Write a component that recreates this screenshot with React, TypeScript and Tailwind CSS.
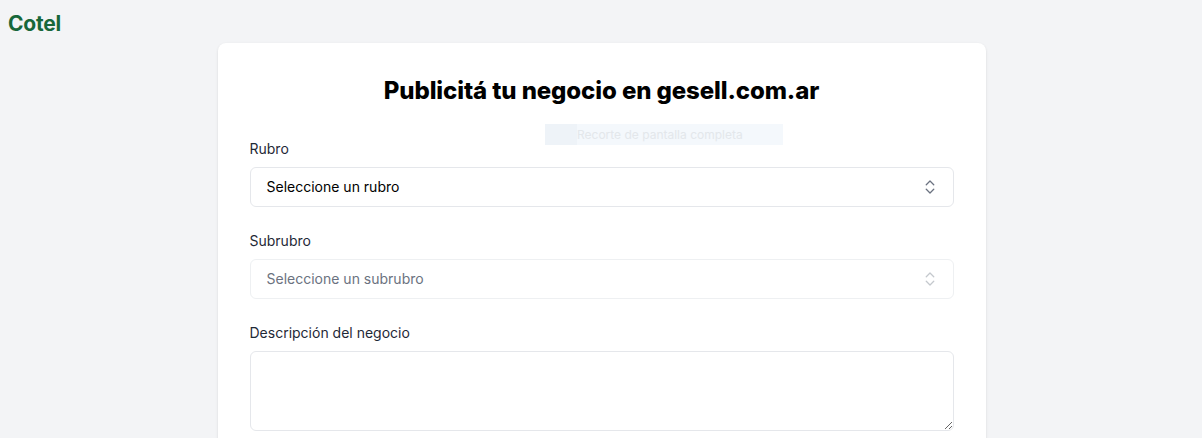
import React from "react";
import { ChevronsUpDown } from "lucide-react";

export default function App() {
  return (
    <div
      className="min-h-screen bg-[#f3f4f6] relative"
      style={{ fontFamily: "Inter, 'Noto Sans', sans-serif" }}
    >
      <div className="pl-2 pt-[10px] h-[43px]">
        <span className="text-[21px] leading-[28px] font-bold text-[#17673a] tracking-[-0.01em]">Cotel</span>
      </div>
      <div className="pl-[1px]">
        <div className="mx-auto w-[768px] bg-white rounded-lg shadow-sm px-8 pt-8 pb-10">
          <h1 className="text-center text-[24px] leading-8 font-extrabold text-black tracking-[-0.1px] mb-8">
            Publicitá tu negocio en gesell.com.ar
          </h1>
          <div className="flex flex-col gap-6">
            <div>
              <label className="block text-sm leading-5 text-[#1f2937] mb-2">Rubro</label>
              <div className="h-10 border border-[#e5e7eb] rounded-md flex items-center justify-between pl-4 pr-[14px]">
                <span className="text-sm text-black">Seleccione un rubro</span>
                <ChevronsUpDown className="w-[18px] h-[18px] text-[#6b7280]" strokeWidth={1.75} />
              </div>
            </div>
            <div>
              <label className="block text-sm leading-5 text-[#1f2937] mb-2">Subrubro</label>
              <div className="h-10 border border-[#eef0f2] rounded-md flex items-center justify-between pl-4 pr-[14px]">
                <span className="text-sm text-[#6b7280]">Seleccione un subrubro</span>
                <ChevronsUpDown className="w-[18px] h-[18px] text-[#c4c8cd]" strokeWidth={1.75} />
              </div>
            </div>
            <div>
              <label className="block text-sm leading-5 text-[#1f2937] mb-2">Descripción del negocio</label>
              <textarea className="block w-full h-20 border border-[#e5e7eb] rounded-md px-4 py-2 text-sm outline-none" />
            </div>
          </div>
        </div>
      </div>
      <div className="absolute left-[545px] top-[124px] w-[238px] h-[21px] bg-[#f4f8fc] flex items-center">
        <div className="w-[32px] h-full bg-[#eef3f8]" />
        <span className="text-[12px] text-[#e3e7eb]">Recorte de pantalla completa</span>
      </div>
    </div>
  );
}
